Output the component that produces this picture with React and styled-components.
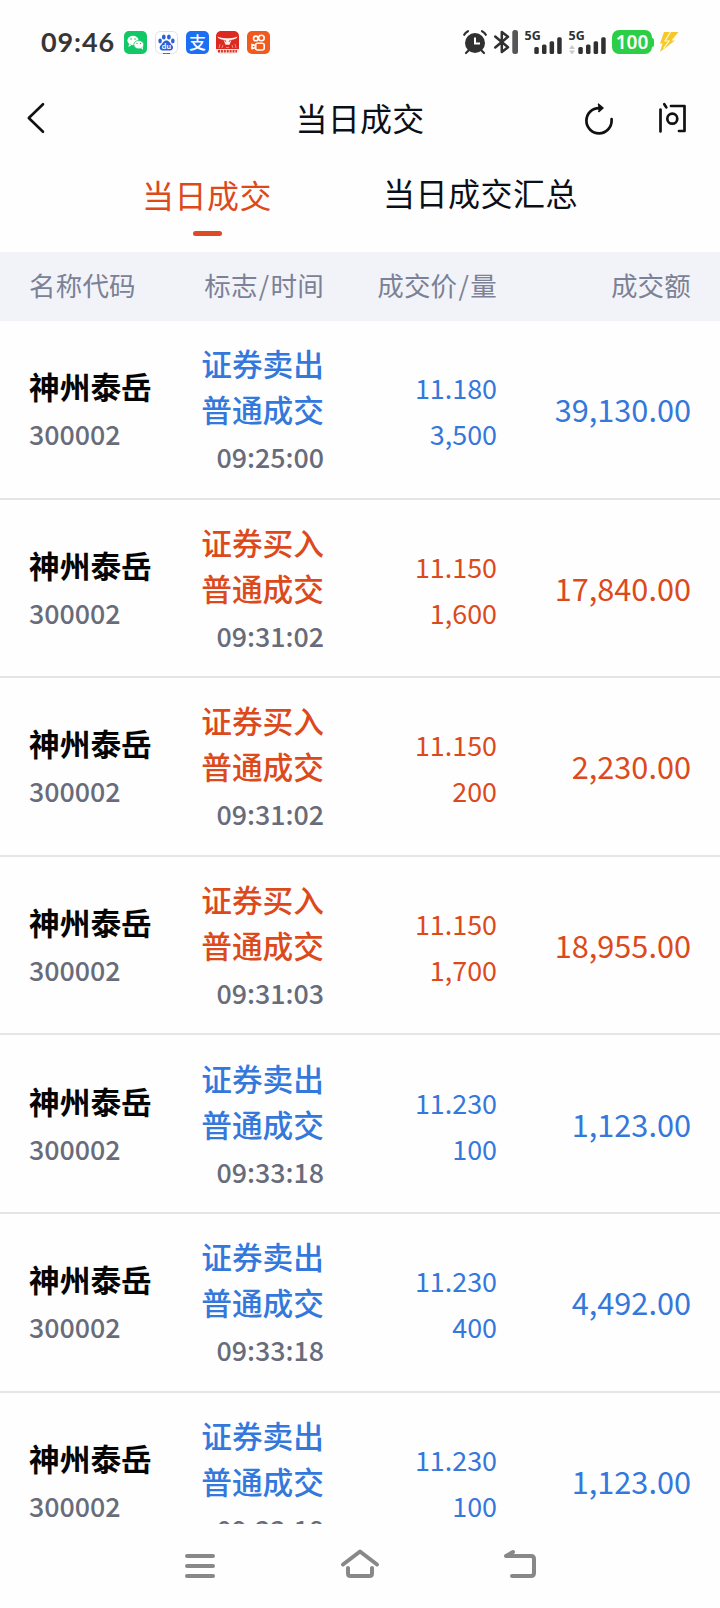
import React from "react";
import styled, { createGlobalStyle } from "styled-components";

const GlobalStyle = createGlobalStyle`
  * { box-sizing: border-box; }
  body {
    margin: 0;
    background: #fefefe;
    font-family: "Noto Sans CJK SC", "Noto Sans", sans-serif;
  }
`;

const colors = { sell: "#3478dc", buy: "#dc4a1c", ink: "#0b0f18", muted: "#7b8196", sub: "#686c7a" };

const Screen = styled.div`
  width: 720px;
  height: 1608px;
  display: flex;
  flex-direction: column;
  overflow: hidden;
  background: #fefefe;
`;

const StatusBar = styled.header`
  height: 84px;
  flex: none;
  display: flex;
  align-items: center;
  padding: 0 41px 0 41px;
`;

const Clock = styled.span`
  width: 83px;
  font: 700 27px/32px Lato, sans-serif;
  letter-spacing: 0.9px;
  color: #363636;
`;

const AppIcons = styled.div`
  display: flex;
  gap: 7.8px;
`;

const StatusIcons = styled.div`
  display: flex;
  align-items: center;
  margin-left: auto;
`;

const Glyph = styled.svg`
  display: block;
  flex: none;
  overflow: visible;
  margin-left: ${(p) => p.$gap || 0}px;
`;

const Battery = styled.div`
  display: flex;
  align-items: center;
  margin-left: 6px;
`;

const BatteryBody = styled.span`
  width: 40px;
  height: 24px;
  border-radius: 7px;
  background: #2bce45;
  color: #fff;
  font: 600 19px/24px "Noto Sans", sans-serif;
  text-align: center;
`;

const BatteryTip = styled.span`
  width: 2px;
  height: 9px;
  border-radius: 0 2px 2px 0;
  background: #2bce45;
`;

const NavBar = styled.div`
  height: 72px;
  flex: none;
  display: grid;
  grid-template-columns: 200px 1fr 200px;
  align-items: center;
  padding: 0 34px 4px 27px;
`;

const Title = styled.h1`
  margin: 0;
  padding: 0 0 3px 7px;
  text-align: center;
  font-size: 32px;
  line-height: 46px;
  font-weight: 400;
  letter-spacing: 0.3px;
  color: ${colors.ink};
`;

const Actions = styled.div`
  display: flex;
  justify-content: flex-end;
  gap: 46px;
`;

const Tabs = styled.nav`
  height: 96px;
  flex: none;
  display: flex;
  padding-left: 142px;
  gap: 111px;
`;

const Tab = styled.div`
  display: flex;
  flex-direction: column;
  align-items: center;
  padding-top: ${(p) => (p.$active ? 15 : 13)}px;
  font-size: 32px;
  letter-spacing: 0.5px;
  line-height: 46px;
  color: ${(p) => (p.$active ? colors.buy : colors.ink)};
`;

const Underline = styled.span`
  width: 29px;
  height: 5px;
  margin-top: 14px;
  border-radius: 3px;
  background: #dc4a26;
`;

const columns = `
  display: grid;
  grid-template-columns: 150px 145px 173px 194px;
  align-items: center;
  padding: 0 29px;
`;

const TableHead = styled.div`
  ${columns}
  height: 69px;
  flex: none;
  padding-bottom: 4px;
  background: #f2f3f8;
  color: ${colors.muted};
  font-size: 26.5px;
  letter-spacing: 0.2px;
  line-height: 40px;
`;

const HeadCell = styled.span`
  text-align: ${(p) => (p.$left ? "left" : "right")};
`;

const Slash = styled.span`
  padding: 0 1.2px;
`;

const List = styled.main`
  height: 1203px;
  flex: none;
  overflow: hidden;
`;

const Row = styled.article`
  ${columns}
  height: 178.6px;
  border-bottom: 2px solid #e3e6e6;
`;

const Cell = styled.div`
  display: flex;
  flex-direction: column;
  align-items: ${(p) => (p.$left ? "flex-start" : "flex-end")};
  line-height: 46px;
  white-space: nowrap;
`;

const Name = styled.span`
  font-size: 30.7px;
  font-weight: 700;
  color: #050505;
`;

const Sub = styled.span`
  padding-top: 2px;
  margin-bottom: -2px;
  font-size: 26.8px;
  font-weight: 500;
  color: ${colors.sub};
`;

const Flag = styled.span`
  font-size: 30.7px;
  font-weight: 500;
  color: ${(p) => colors[p.$side]};
`;

const Price = styled.span`
  padding-top: 2px;
  margin-bottom: -2px;
  font-size: 26.9px;
  color: ${(p) => colors[p.$side]};
`;

const Amount = styled.span`
  font-size: 30.7px;
  color: ${(p) => colors[p.$side]};
`;

const SystemNav = styled.footer`
  flex: 1;
  display: flex;
  justify-content: center;
  gap: 120px;
  padding-top: 24px;
`;

const trades = [
  ["sell", "09:25:00", "11.180", "3,500", "39,130.00"],
  ["buy", "09:31:02", "11.150", "1,600", "17,840.00"],
  ["buy", "09:31:02", "11.150", "200", "2,230.00"],
  ["buy", "09:31:03", "11.150", "1,700", "18,955.00"],
  ["sell", "09:33:18", "11.230", "100", "1,123.00"],
  ["sell", "09:33:18", "11.230", "400", "4,492.00"],
  ["sell", "09:33:18", "11.230", "100", "1,123.00"],
];

function WeChatIcon() {
  return (
    <Glyph width="23" height="23" viewBox="0 0 23 23">
      <rect width="23" height="23" rx="5" fill="#12c765" />
      <ellipse cx="9" cy="9.5" rx="5.6" ry="4.7" fill="#fff" />
      <path d="M5 13l-.6 3 3-1.7z" fill="#fff" />
      <ellipse cx="14.8" cy="13.7" rx="5" ry="4.2" fill="#fff" stroke="#12c765" strokeWidth=".8" />
      <path d="M17 17l2 1.8-.2-3z" fill="#fff" />
      <g fill="#12c765">
        <circle cx="7" cy="8" r=".8" /><circle cx="11" cy="8" r=".8" />
        <circle cx="13" cy="12.5" r=".7" /><circle cx="16.6" cy="12.5" r=".7" />
      </g>
    </Glyph>
  );
}

function BaiduIcon() {
  return (
    <Glyph width="23" height="23" viewBox="0 0 23 23">
      <rect x=".5" y=".5" width="22" height="22" rx="5" fill="#fff" stroke="#e1e2e8" />
      <g fill="#2c5fd8">
        <ellipse cx="5.1" cy="10" rx="1.8" ry="2.4" />
        <ellipse cx="8.8" cy="6" rx="1.9" ry="2.6" />
        <ellipse cx="13.9" cy="6" rx="1.9" ry="2.6" />
        <ellipse cx="17.8" cy="10" rx="1.8" ry="2.4" />
        <path d="M11.4 9.6c2.8 0 3.6 2.8 5.4 4.4 2.4 2.2 1 5.5-1.6 5.5H7.6c-2.8 0-4-3.3-1.6-5.5 1.8-1.6 2.6-4.4 5.4-4.4z" />
      </g>
      <text x="11.4" y="18.2" textAnchor="middle" fontFamily="Lato, sans-serif" fontWeight="700" fontSize="8" fill="#fff">du</text>
      <path d="M8 22.5h3.5" stroke="#e1322d" />
      <path d="M11.5 22.5H15" stroke="#2c5fd8" />
    </Glyph>
  );
}

function AlipayIcon() {
  return (
    <Glyph width="23" height="23" viewBox="0 0 23 23">
      <rect width="23" height="23" rx="5" fill="#1b6ff2" />
      <text x="11.5" y="17.5" textAnchor="middle" fontFamily="Noto Sans CJK SC, sans-serif" fontWeight="500" fontSize="17" fill="#fff">支</text>
    </Glyph>
  );
}

function BullIcon() {
  return (
    <Glyph width="23" height="23" viewBox="0 0 23 23">
      <path d="M0 18V5a5 5 0 0 1 5-5h13a5 5 0 0 1 5 5v13z" fill="#dc2a22" />
      <path d="M0 18h23a5 5 0 0 1-5 5H5a5 5 0 0 1-5-5z" fill="#fbe5dd" />
      <path d="M1.5 5.5c2.500 1.500 5 1 8 1.800h4c3-.8 5.500-.3 8-1.800-.5 2.200-3 3-6 3.200l-2 5h-4l-2-5c-3-.2-5.500-1-6-3.200z" fill="#fff0e9" />
      <path d="M8.500 9.500l1.700 1M14.500 9.500l-1.700 1" stroke="#b91c16" />
      <path d="M3 17l1-4M6 17l1-3M20 17l-1-4M17 17l-1-3M10 16.500h3" stroke="#f18c78" />
      <path d="M2 20.300h19" stroke="#cf3a30" strokeWidth="2.600" strokeDasharray="2 .9" />
    </Glyph>
  );
}

function KuaishouIcon() {
  return (
    <Glyph width="23" height="23" viewBox="0 0 23 23">
      <rect width="23" height="23" rx="5" fill="#f15a1c" />
      <g fill="none" stroke="#fff" strokeWidth="1.6">
        <circle cx="8.8" cy="7.4" r="2.3" />
        <circle cx="14.4" cy="7" r="2.8" />
        <rect x="8.6" y="12.2" width="8.6" height="6.8" rx="2" />
        <path d="M8.4 14.6l-3.400-1.200v4.400l3.400-1.200z" strokeLinejoin="round" />
      </g>
    </Glyph>
  );
}

function AlarmIcon() {
  return (
    <Glyph width="24" height="24" viewBox="0 0 24 24">
      <circle cx="12" cy="13" r="10" fill="#303030" />
      <g fill="none" stroke="#303030" strokeWidth="2.200" strokeLinecap="round">
        <path d="M1.200 4.800C2 3.200 3.200 2 5 1.200M19 1.200c1.800.8 3 2 3.800 3.600M5.500 20.500l-2.500 2.500M18.500 20.500l2.500 2.500" />
      </g>
      <path d="M12 7.500v6h5" fill="none" stroke="#fff" strokeWidth="2" />
    </Glyph>
  );
}

function BluetoothIcon() {
  return (
    <Glyph width="25" height="24" viewBox="0 0 25 24" $gap={7}>
      <path d="M1.200 6.500L14 17.200 7.800 22V2L14 6.800 1.200 17.500" fill="none" stroke="#303030" strokeWidth="2.500" strokeLinejoin="round" strokeLinecap="round" />
      <rect x="18.300" y="0" width="5.700" height="24" rx="2.500" fill="#565656" />
    </Glyph>
  );
}

function SignalIcon({ arrows, gap }) {
  return (
    <Glyph width="37" height="24" viewBox="0 0 37 24" $gap={gap}>
      <text x="-.5" y="9.600" fontFamily="Noto Sans, sans-serif" fontWeight="700" fontSize="12.500" fill="#303030">5G</text>
      {arrows && <path d="M0 19l3-4 3 4zM0 20.500l3 4 3-4z" fill="#c9c9c9" />}
      <g fill="#303030">
        <rect x="9.300" y="17" width="4.500" height="7" rx="1.500" />
        <rect x="17" y="14.500" width="4.500" height="9.500" rx="1.500" />
        <rect x="24.600" y="11.300" width="4.500" height="12.700" rx="1.500" />
        <rect x="32.200" y="7.200" width="4.500" height="16.800" rx="1.500" />
      </g>
    </Glyph>
  );
}

function BoltIcon() {
  return (
    <Glyph width="20" height="22" viewBox="0 0 20 22" $gap={5}>
      <path d="M5 1h14.500L12.500 9.500h3.500L1 21l2.500-8.500H1z" fill="#f6c928" />
      <path d="M11.500 1L6 10h4L4.500 17.500" fill="none" stroke="#fff7d6" strokeWidth="1.200" />
    </Glyph>
  );
}

export default function App() {
  return (
    <>
      <GlobalStyle />
      <Screen>
        <StatusBar>
          <Clock>09:46</Clock>
          <AppIcons>
            <WeChatIcon />
            <BaiduIcon />
            <AlipayIcon />
            <BullIcon />
            <KuaishouIcon />
          </AppIcons>
          <StatusIcons>
            <AlarmIcon />
            <BluetoothIcon />
            <SignalIcon gap={6} />
            <SignalIcon gap={7} arrows />
            <Battery>
              <BatteryBody>100</BatteryBody>
              <BatteryTip />
            </Battery>
            <BoltIcon />
          </StatusIcons>
        </StatusBar>

        <NavBar>
          <Glyph width="18" height="30" viewBox="0 0 18 30">
            <path d="M16 1.200L1.800 15 16 28.800" fill="none" stroke="#111" strokeWidth="2.600" strokeLinecap="round" strokeLinejoin="round" />
          </Glyph>
          <Title>当日成交</Title>
          <Actions>
            <Glyph width="28" height="31" viewBox="0 0 28 31">
              <path d="M16 5.100H14A12.600 12.600 0 1 0 26.600 17.500V16" fill="none" stroke="#111" strokeWidth="2.700" strokeLinecap="round" />
              <path d="M13 .8L18 5l-4.500 4" fill="#111" stroke="#111" strokeWidth="1.500" strokeLinejoin="round" />
            </Glyph>
            <Glyph width="27" height="30" viewBox="0 0 27 30" role="img" aria-label="问">
              <g fill="none" stroke="#111" strokeWidth="2.700" strokeLinecap="round" strokeLinejoin="round">
                <path d="M1.500 6.500v22M5.300 1.200l2 3.200M12 3h13.500v25H20" />
                <circle cx="13.300" cy="15.700" r="5" />
              </g>
            </Glyph>
          </Actions>
        </NavBar>

        <Tabs>
          <Tab $active>
            当日成交
            <Underline />
          </Tab>
          <Tab>当日成交汇总</Tab>
        </Tabs>

        <TableHead>
          <HeadCell $left>名称代码</HeadCell>
          <HeadCell>标志<Slash>/</Slash>时间</HeadCell>
          <HeadCell>成交价<Slash>/</Slash>量</HeadCell>
          <HeadCell>成交额</HeadCell>
        </TableHead>

        <List>
          {trades.map(([side, time, price, volume, amount], i) => (
            <Row key={i}>
              <Cell $left>
                <Name>神州泰岳</Name>
                <Sub>300002</Sub>
              </Cell>
              <Cell>
                <Flag $side={side}>{side === "sell" ? "证券卖出" : "证券买入"}</Flag>
                <Flag $side={side}>普通成交</Flag>
                <Sub>{time}</Sub>
              </Cell>
              <Cell>
                <Price $side={side}>{price}</Price>
                <Price $side={side}>{volume}</Price>
              </Cell>
              <Cell>
                <Amount $side={side}>{amount}</Amount>
              </Cell>
            </Row>
          ))}
        </List>

        <SystemNav>
          <Glyph width="40" height="40" viewBox="0 0 40 40">
            <path d="M7 8h26M7 18h26M7 28h26" stroke="#888" strokeWidth="4" strokeLinecap="round" />
          </Glyph>
          <Glyph width="40" height="40" viewBox="0 0 40 40">
            <g fill="none" stroke="#888" strokeWidth="4" strokeLinecap="round" strokeLinejoin="round">
              <path d="M3 16.500L20 3.500l17 13" />
              <path d="M8 20v5.500q0 2.500 2.500 2.500h19q2.500 0 2.500-2.500V20" />
            </g>
          </Glyph>
          <Glyph width="40" height="40" viewBox="0 0 40 40">
            <g fill="none" stroke="#888" strokeWidth="4" strokeLinecap="round" strokeLinejoin="round">
              <path d="M13 4L6 8h25q3 0 3 3v14q0 3-3 3H12" />
            </g>
          </Glyph>
        </SystemNav>
      </Screen>
    </>
  );
}
